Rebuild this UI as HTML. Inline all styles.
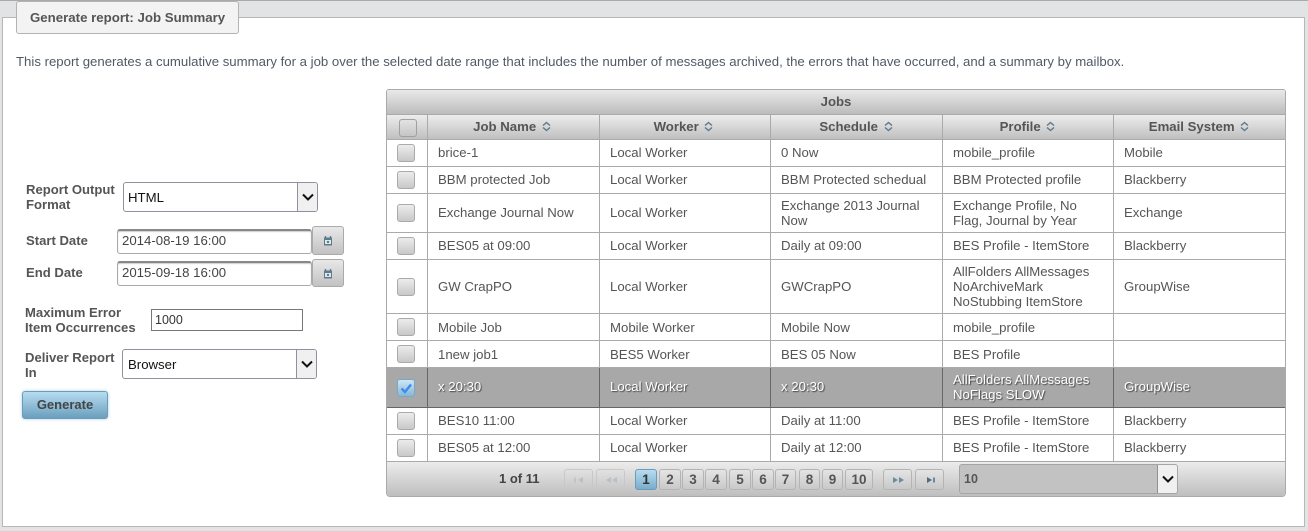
<!DOCTYPE html>
<html><head><meta charset="utf-8"><style>
*{box-sizing:border-box}
html,body{margin:0;padding:0}
body{width:1308px;height:531px;overflow:hidden;background:#e2e3e5;position:relative;font-family:"Liberation Sans",Arial,sans-serif;font-size:13.2px;color:#555}
.a{position:absolute}
.lbl{position:absolute;font-weight:bold;font-size:13.1px;line-height:15px;color:#555}
.sel{position:absolute;background:#fff;border:1px solid #8f929c;border-radius:3px;font-size:13.2px;color:#111;padding-left:4px;display:flex;align-items:center}
.arr{position:absolute;right:0;top:0;bottom:0;width:20px;background:#f0f0f0;border-left:1px solid #8f929c;border-radius:0 2px 2px 0}
.arr svg{position:absolute;left:3px;top:50%;margin-top:-5px}
.inp{position:absolute;background:#fff;border:1px solid #aaa;border-top:2px solid #888;border-radius:3px;font-size:13.2px;color:#444;padding:0 0 4px 4px;display:flex;align-items:center;box-shadow:inset 0 1px 1px #ccc}
.cal{position:absolute;width:32px;border:1px solid #aaa;border-radius:3px;background:linear-gradient(#e8e8e8,#c2c2c2)}
.cal svg{position:absolute;left:10px;top:8px}
#t{position:absolute;left:386px;top:89px;width:900px;height:408px;border:1px solid #aaa;border-radius:3px 3px 4px 4px;overflow:hidden;background:#fff}
.r{position:absolute;left:0;width:898px;border-bottom:1px solid #aaa;color:#555;font-size:13.2px;line-height:15px}
.r>div{position:absolute;top:0;bottom:0;display:flex;align-items:center;padding-left:10px;border-right:1px solid #aaa}
.r.u>div{padding-bottom:2px}
.r.u>div.n{padding-bottom:0}
.c0{left:0;width:41px}.c1{left:41px;width:172px}.c2{left:213px;width:171px}.c3{left:384px;width:172px}.c4{left:556px;width:171px}.c5{left:727px;width:171px;border-right:0!important}
.cb{position:absolute;left:10px;top:50%;margin-top:-9px;width:18px;height:18px;border:1px solid #aaa;border-radius:3px;background:linear-gradient(#ececec,#c8c8c8)}
.h{background:linear-gradient(#ededed,#bfbfbf);font-weight:bold;text-align:center}
.h>div{justify-content:center;padding:0 0 2px 0}
.h>div.p{padding-right:2px}
.h>div svg{margin-left:1px}
.s{background:#a8a8a8;color:#fff;text-shadow:1px 1px 1px #444;border-bottom-color:#666}
.s>div{border-right-color:#666}
.b{position:absolute;top:469px;height:21px;border:1px solid #b4b4b4;border-radius:3px;text-align:center;font-weight:bold;font-size:13.5px;line-height:19px;color:#555;background:linear-gradient(#e4e4e4,#c9c9c9)}
.d{border-color:#c8c8c8;background:none}
.b svg{position:absolute;left:9px;top:6px}
</style></head><body>
<div class="a" style="left:0;top:0;width:1308px;height:1px;background:#aaa"></div>
<div class="a" style="left:2px;top:17px;width:1303px;height:510px;background:#fff;border:1px solid #b8b8b8"></div>
<div class="a" style="left:16px;top:1px;width:223px;height:33px;background:#f3f3f3;border:1px solid #b3b3b3;border-radius:3px;font-weight:bold;font-size:13.25px;line-height:31px;padding-left:13px;color:#555">Generate report: Job Summary</div>
<div class="a" style="left:16px;top:54px;white-space:nowrap;line-height:16px;color:#4f5a66">This report generates a cumulative summary for a job over the selected date range that includes the number of messages archived, the errors that have occurred, and a summary by mailbox.</div>

<div class="lbl" style="left:26px;top:182px">Report Output<br>Format</div>
<div class="sel" style="left:123px;top:182px;width:195px;height:30px">HTML<span class="arr"><svg width="14" height="10"><path d="M2 2.5L7 7.5L12 2.5" fill="none" stroke="#111" stroke-width="2"/></svg></span></div>
<div class="lbl" style="left:26px;top:233px">Start Date</div>
<div class="inp" style="left:117px;top:229px;width:195px;height:25px">2014-08-19 16:00</div>
<div class="cal" style="left:312px;top:226px;height:29px"><svg width="10" height="11"><path d="M1 2.5h8v8h-8z" fill="#5d7b8c"/><path d="M2 5h6v4h-6z" fill="#dfe6ea"/><path d="M2.5 1v2M7.5 1v2" stroke="#5d7b8c" stroke-width="1.4"/><path d="M4 6h2v2h-2z" fill="#5d7b8c"/></svg></div>
<div class="lbl" style="left:26px;top:265px">End Date</div>
<div class="inp" style="left:117px;top:261px;width:195px;height:25px">2015-09-18 16:00</div>
<div class="cal" style="left:312px;top:259px;height:28px"><svg width="10" height="11"><path d="M1 2.5h8v8h-8z" fill="#5d7b8c"/><path d="M2 5h6v4h-6z" fill="#dfe6ea"/><path d="M2.5 1v2M7.5 1v2" stroke="#5d7b8c" stroke-width="1.4"/><path d="M4 6h2v2h-2z" fill="#5d7b8c"/></svg></div>
<div class="lbl" style="left:25px;top:305px">Maximum Error<br>Item Occurrences</div>
<div class="a" style="left:151px;top:309px;width:152px;height:22px;border:1px solid #777;background:#fff;font-size:12.5px;line-height:20px;padding-left:3px;color:#333">1000</div>
<div class="lbl" style="left:25px;top:350px">Deliver Report<br>In</div>
<div class="sel" style="left:122px;top:349px;width:195px;height:30px;padding-left:5px">Browser<span class="arr"><svg width="14" height="10"><path d="M2 2.5L7 7.5L12 2.5" fill="none" stroke="#111" stroke-width="2"/></svg></span></div>
<div class="a" style="left:22px;top:391px;width:86px;height:28px;border:1px solid #6d9cb8;border-radius:3px;background:linear-gradient(#b6dcf2,#6b9fbd);box-shadow:0 0 3px #a9cfe4;text-align:center;font-weight:bold;font-size:13px;line-height:25px;color:#444">Generate</div>

<div id="t">
<div class="r h" style="top:0;height:25px;line-height:24px;background:linear-gradient(#e9e9e9,#bcbcbc)">Jobs</div>
<div class="r h" style="top:25px;height:25px">
<div class="c0"><span class="cb" style="left:12px;margin-top:-8px;background:none;border-color:#a0a0a0"></span></div>
<div class="c1 p">Job Name&nbsp;<svg width="11" height="11"><path d="M2 4.5L5.5 1.5L9 4.5M2 6.5L5.5 9.5L9 6.5" fill="none" stroke="#5f7786" stroke-width="1.4"/></svg></div>
<div class="c2 p">Worker&nbsp;<svg width="11" height="11"><path d="M2 4.5L5.5 1.5L9 4.5M2 6.5L5.5 9.5L9 6.5" fill="none" stroke="#5f7786" stroke-width="1.4"/></svg></div>
<div class="c3">Schedule&nbsp;<svg width="11" height="11"><path d="M2 4.5L5.5 1.5L9 4.5M2 6.5L5.5 9.5L9 6.5" fill="none" stroke="#5f7786" stroke-width="1.4"/></svg></div>
<div class="c4">Profile&nbsp;<svg width="11" height="11"><path d="M2 4.5L5.5 1.5L9 4.5M2 6.5L5.5 9.5L9 6.5" fill="none" stroke="#5f7786" stroke-width="1.4"/></svg></div>
<div class="c5">Email System&nbsp;<svg width="11" height="11"><path d="M2 4.5L5.5 1.5L9 4.5M2 6.5L5.5 9.5L9 6.5" fill="none" stroke="#5f7786" stroke-width="1.4"/></svg></div>
</div>
<div class="r u" style="top:50px;height:27px"><div class="c0"><span class="cb"></span></div><div class="c1">brice-1</div><div class="c2">Local Worker</div><div class="c3">0 Now</div><div class="c4">mobile_profile</div><div class="c5">Mobile</div></div>
<div class="r u" style="top:77px;height:27px"><div class="c0"><span class="cb"></span></div><div class="c1">BBM protected Job</div><div class="c2">Local Worker</div><div class="c3">BBM Protected schedual</div><div class="c4">BBM Protected profile</div><div class="c5">Blackberry</div></div>
<div class="r u" style="top:104px;height:39px"><div class="c0"><span class="cb"></span></div><div class="c1">Exchange Journal Now</div><div class="c2">Local Worker</div><div class="c3 n">Exchange 2013 Journal<br>Now</div><div class="c4 n">Exchange Profile, No<br>Flag, Journal by Year</div><div class="c5">Exchange</div></div>
<div class="r u" style="top:143px;height:27px"><div class="c0"><span class="cb"></span></div><div class="c1">BES05 at 09:00</div><div class="c2">Local Worker</div><div class="c3">Daily at 09:00</div><div class="c4">BES Profile - ItemStore</div><div class="c5">Blackberry</div></div>
<div class="r" style="top:170px;height:54px"><div class="c0"><span class="cb"></span></div><div class="c1">GW CrapPO</div><div class="c2">Local Worker</div><div class="c3">GWCrapPO</div><div class="c4">AllFolders AllMessages<br>NoArchiveMark<br>NoStubbing ItemStore</div><div class="c5">GroupWise</div></div>
<div class="r" style="top:224px;height:27px"><div class="c0"><span class="cb"></span></div><div class="c1">Mobile Job</div><div class="c2">Mobile Worker</div><div class="c3">Mobile Now</div><div class="c4">mobile_profile</div><div class="c5"></div></div>
<div class="r" style="top:251px;height:27px"><div class="c0"><span class="cb"></span></div><div class="c1">1new job1</div><div class="c2">BES5 Worker</div><div class="c3">BES 05 Now</div><div class="c4">BES Profile</div><div class="c5"></div></div>
<div class="r s u" style="top:278px;height:40px"><div class="c0"><span class="cb" style="background:linear-gradient(#cfe6f5,#86b7d6);border-color:#7aa7c4"><svg width="16" height="16" style="position:absolute;left:0;top:0"><path d="M3.5 8.5L7 12L13 4.5" fill="none" stroke="#3b8cf0" stroke-width="2.4"/></svg></span></div><div class="c1">x 20:30</div><div class="c2">Local Worker</div><div class="c3">x 20:30</div><div class="c4">AllFolders AllMessages<br>NoFlags SLOW</div><div class="c5">GroupWise</div></div>
<div class="r u" style="top:318px;height:27px"><div class="c0"><span class="cb"></span></div><div class="c1">BES10 11:00</div><div class="c2">Local Worker</div><div class="c3">Daily at 11:00</div><div class="c4">BES Profile - ItemStore</div><div class="c5">Blackberry</div></div>
<div class="r u" style="top:345px;height:27px"><div class="c0"><span class="cb"></span></div><div class="c1">BES05 at 12:00</div><div class="c2">Local Worker</div><div class="c3">Daily at 12:00</div><div class="c4">BES Profile - ItemStore</div><div class="c5">Blackberry</div></div>
<div class="a" style="left:0;top:372px;width:898px;height:35px;background:linear-gradient(#ececec,#bdbdbd)"></div>
</div>

<div class="a" style="left:499px;top:471px;font-weight:bold;font-size:13px;line-height:16px;color:#444">1 of 11</div>
<div class="b d" style="left:564px;width:29px"><svg width="11" height="8"><path d="M1 1.5v5" stroke="#b5c0c8" stroke-width="1.5"/><path d="M9 1L4 4L9 7z" fill="#b5c0c8"/></svg></div>
<div class="b d" style="left:596px;width:29px"><svg width="11" height="8"><path d="M5 1L0 4L5 7zM11 1L6 4L11 7z" fill="#b5c0c8"/></svg></div>
<div class="b" style="left:635px;width:22px;background:linear-gradient(#b6dcf2,#7aaccb);border-color:#6d9cb8;color:#333">1</div>
<div class="b" style="left:659px;width:22px">2</div>
<div class="b" style="left:682px;width:22px">3</div>
<div class="b" style="left:705px;width:22px">4</div>
<div class="b" style="left:729px;width:22px">5</div>
<div class="b" style="left:752px;width:22px">6</div>
<div class="b" style="left:775px;width:21px">7</div>
<div class="b" style="left:799px;width:21px">8</div>
<div class="b" style="left:822px;width:21px">9</div>
<div class="b" style="left:845px;width:28px">10</div>
<div class="b" style="left:883px;width:29px"><svg width="11" height="8"><path d="M0 1L5 4L0 7zM6 1L11 4L6 7z" fill="#6f8a9c"/></svg></div>
<div class="b" style="left:915px;width:29px"><svg width="11" height="8"><path d="M2 1L7 4L2 7z" fill="#4f6d80"/><path d="M9 1.5v5" stroke="#4f6d80" stroke-width="1.5"/></svg></div>
<div class="sel" style="left:959px;top:464px;width:219px;height:30px;background:#c2c2c2;border-color:#a5a5a5;color:#555;font-weight:bold;font-size:12.5px">10<span class="arr" style="background:#f0f0f0"><svg width="14" height="10"><path d="M2 2.5L7 7.5L12 2.5" fill="none" stroke="#111" stroke-width="2"/></svg></span></div>
</body></html>
